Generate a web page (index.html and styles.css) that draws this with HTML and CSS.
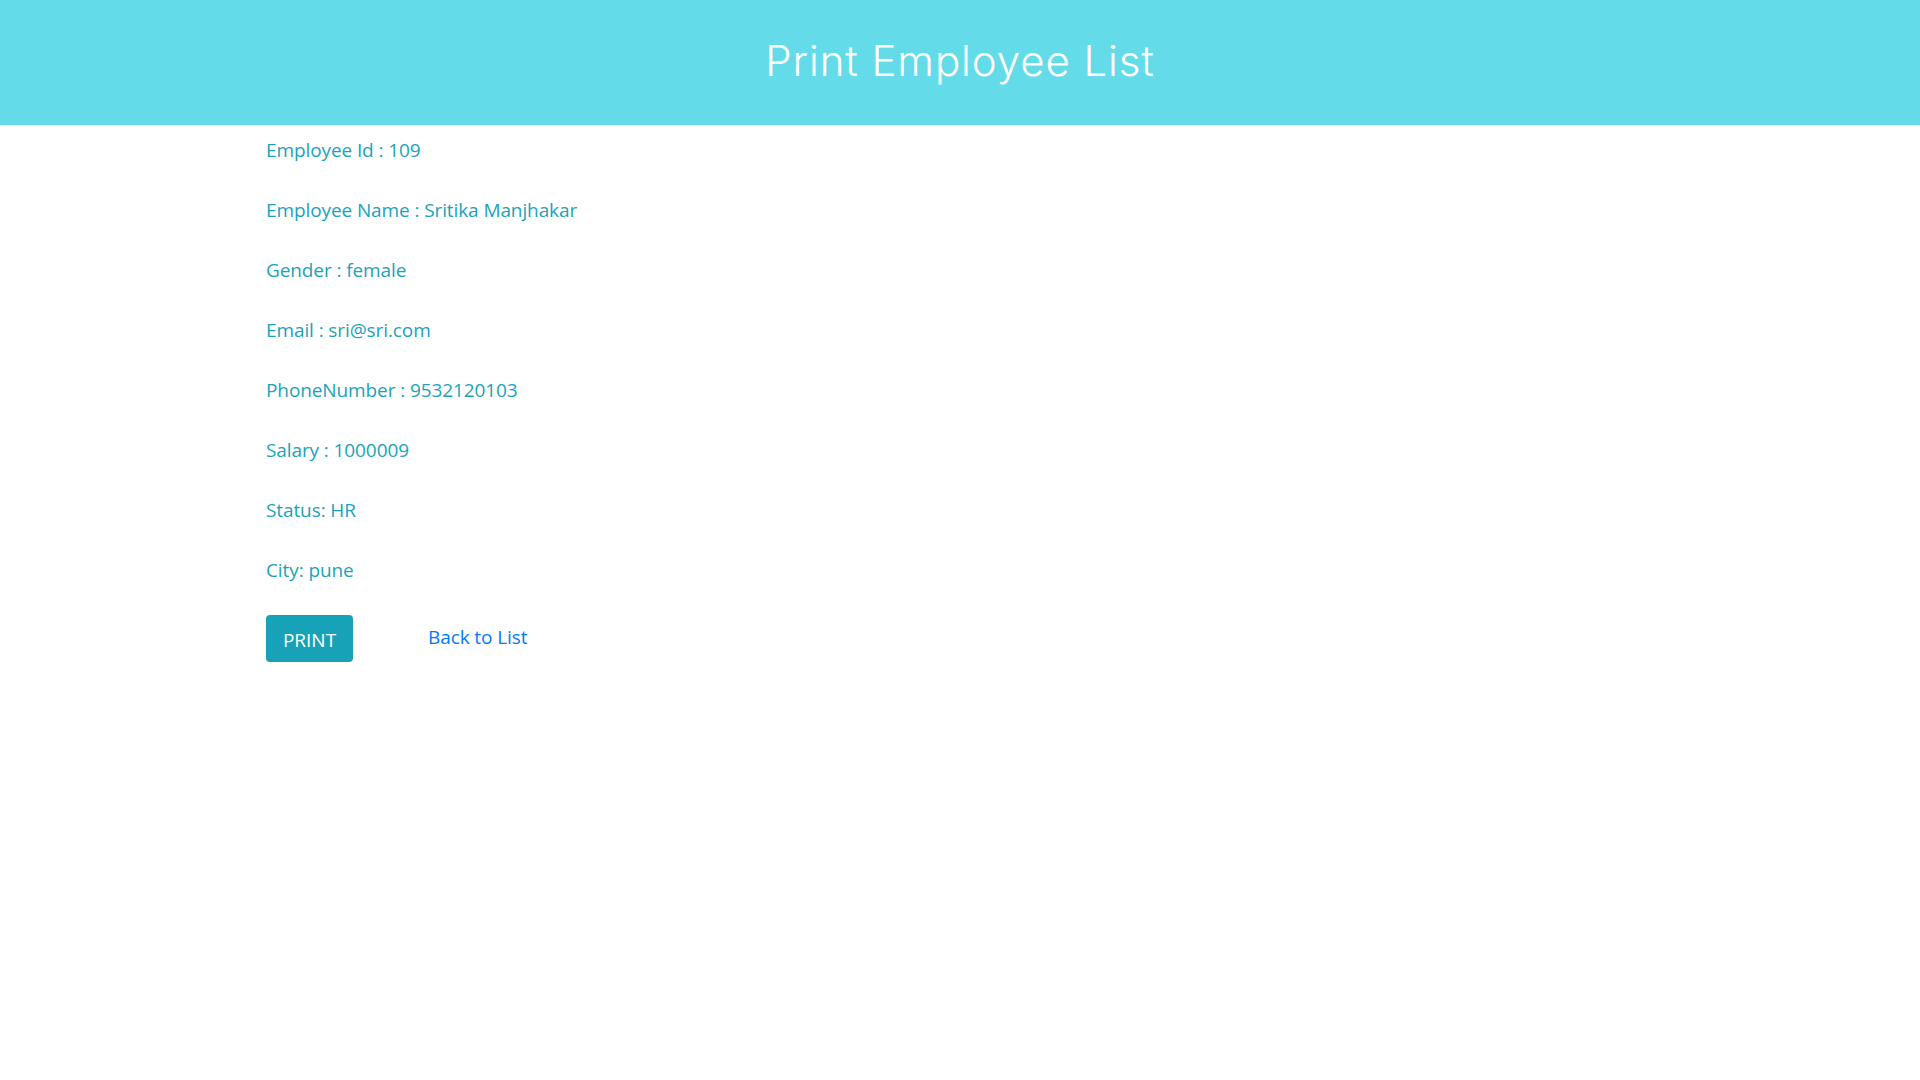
FILE: index.html
```html
<!DOCTYPE html>
<html>
<head>
<meta charset="utf-8">
<title>Print Employee List</title>
<link rel="stylesheet" href="styles.css">
</head>
<body>
<header class="banner">
  <h1 class="banner-title">Print Employee List</h1>
</header>
<main class="details">
  <p class="field">Employee Id : 109</p>
  <p class="field">Employee Name : Sritika Manjhakar</p>
  <p class="field">Gender : female</p>
  <p class="field">Email : sri@sri.com</p>
  <p class="field">PhoneNumber : 9532120103</p>
  <p class="field">Salary : 1000009</p>
  <p class="field">Status: HR</p>
  <p class="field">City: pune</p>
  <div class="actions">
    <button class="btn-print">PRINT</button>
    <a class="back-link" href="#">Back to List</a>
  </div>
</main>
</body>
</html>
```
FILE: styles.css
```css
html, body {
  margin: 0;
  padding: 0;
  background: #ffffff;
}
body {
  font-family: "Open Sans", "Noto Sans", sans-serif;
}
.banner {
  height: 125px;
  background: #63dbe9;
  display: flex;
  justify-content: center;
  align-items: flex-start;
}
.banner-title {
  margin: 0;
  padding-top: 36px;
  font-family: Inter, "Open Sans", sans-serif;
  font-weight: 300;
  font-size: 42px;
  line-height: 50px;
  color: #ffffff;
  letter-spacing: 0.9px;
}
.details {
  padding: 10px 0 0 266px;
}
.field {
  margin: 0 0 30px 0;
  font-size: 19px;
  line-height: 30px;
  color: #1ba3b9;
  letter-spacing: -0.1px;
}
.actions {
  display: flex;
  align-items: center;
  gap: 75px;
}
.btn-print {
  width: 87px;
  height: 47px;
  border: none;
  border-radius: 4px;
  background: #17a2b8;
  color: #ffffff;
  font-family: "Open Sans", sans-serif;
  font-size: 19px;
  font-weight: 500;
  padding: 0;
  padding-top: 2px;
}
.back-link {
  font-size: 19px;
  color: #007bff;
  text-decoration: none;
  letter-spacing: -0.1px;
  margin-top: -4px;
}
```
